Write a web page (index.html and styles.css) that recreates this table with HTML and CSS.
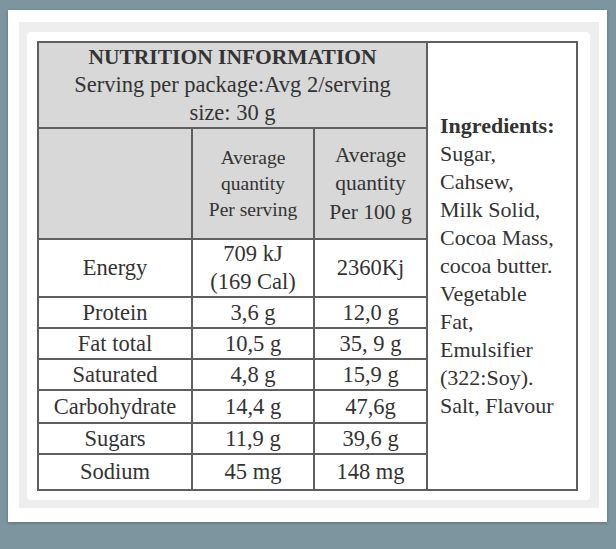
FILE: index.html
```html
<!DOCTYPE html>
<html lang="en">
<head>
<meta charset="utf-8">
<title>Nutrition Information</title>
<link rel="stylesheet" href="styles.css">
</head>
<body>
<div class="frame">
  <div class="panel">
    <div class="card">
      <table class="nutri">
        <colgroup>
          <col class="c1"><col class="c2"><col class="c3"><col class="c4">
        </colgroup>
        <tr class="r-head">
          <th colspan="3" class="head">
            <span class="title">NUTRITION INFORMATION</span><br>
            Serving per package:Avg 2/serving<br>size: 30 g
          </th>
          <td rowspan="9" class="ingr">
            <strong>Ingredients:</strong><br>Sugar,<br>Cahsew,<br>Milk Solid,<br>Cocoa Mass,<br>cocoa butter.<br>Vegetable<br>Fat,<br>Emulsifier<br>(322:Soy).<br>Salt, Flavour
          </td>
        </tr>
        <tr class="r-sub">
          <th class="sub"></th>
          <th class="sub sub-a">Average<br>quantity<br>Per serving</th>
          <th class="sub sub-b">Average<br>quantity<br>Per 100 g</th>
        </tr>
        <tr class="r-energy"><td>Energy</td><td>709 kJ<br>(169 Cal)</td><td>2360Kj</td></tr>
        <tr class="r-31"><td>Protein</td><td>3,6 g</td><td>12,0 g</td></tr>
        <tr class="r-31"><td>Fat total</td><td>10,5 g</td><td>35, 9 g</td></tr>
        <tr class="r-31"><td>Saturated</td><td>4,8 g</td><td>15,9 g</td></tr>
        <tr class="r-33"><td>Carbohydrate</td><td>14,4 g</td><td>47,6g</td></tr>
        <tr class="r-31"><td>Sugars</td><td>11,9 g</td><td>39,6 g</td></tr>
        <tr class="r-36"><td>Sodium</td><td>45 mg</td><td>148 mg</td></tr>
      </table>
    </div>
  </div>
</div>
</body>
</html>
```

FILE: styles.css
```css
html, body {
  margin: 0;
  padding: 0;
}
body {
  background: #7d959f;
  width: 616px;
  height: 549px;
  overflow: hidden;
  font-family: "Liberation Serif", "Times New Roman", serif;
  color: #333;
}
.frame {
  margin: 10px 0 0 8px;
  width: 599px;
  height: 512px;
  box-sizing: border-box;
  background: #fff;
  padding: 12px 8px 14px 11px;
  box-shadow: 0 1px 3px rgba(0, 0, 0, 0.25);
}
.panel {
  background: #eeeeee;
  height: 100%;
  box-sizing: border-box;
  padding: 10px 9px 8px 8px;
}
.card {
  background: #fff;
  border-radius: 4px;
  height: 100%;
  box-sizing: border-box;
  padding: 9px 13px 11px 10px;
}
.nutri {
  border-collapse: collapse;
  table-layout: fixed;
  width: 539px;
}
.c1 { width: 154px; }
.c2 { width: 122px; }
.c3 { width: 113px; }
.c4 { width: 150px; }
.nutri th, .nutri td {
  border: 2px solid #5f5f5f;
  padding: 0;
  text-align: center;
  vertical-align: middle;
  font-size: 22.5px;
  line-height: 28px;
  font-weight: normal;
  color: #333;
}
.nutri .head {
  background: #d8d8d8;
  font-size: 22.5px;
}
.title {
  font-weight: bold;
  font-size: 21.5px;
}
.nutri .sub {
  background: #d8d8d8;
}
.nutri .sub-a {
  font-size: 19.5px;
  line-height: 26px;
}
.nutri .sub-b {
  font-size: 21.5px;
  line-height: 28.5px;
}
.nutri .ingr {
  text-align: left;
  padding-left: 12px;
  padding-bottom: 1px;
  font-size: 22px;
  background: #fff;
}
.r-head { height: 86px; }
.r-sub { height: 111px; }
.r-energy { height: 58px; }
.r-31 { height: 31px; }
.r-33 { height: 33px; }
.r-36 { height: 36px; }
```
